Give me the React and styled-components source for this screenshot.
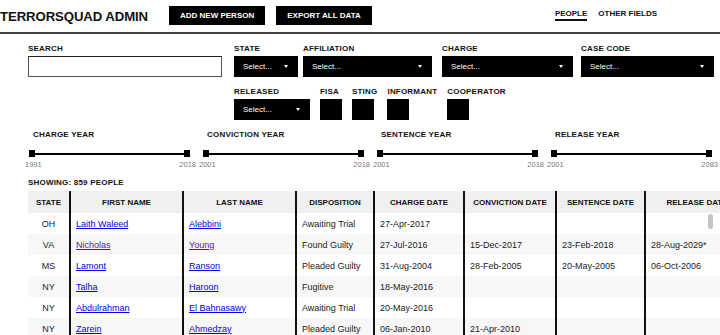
import styled, { createGlobalStyle } from "styled-components";

const Global = createGlobalStyle`
    html, body{
        margin: 0;
        padding: 0;
        overflow: hidden;
        background: #fff;
    }
    body{
        font-family: "Liberation Sans", Arial, sans-serif;
        color: #111;
    }
`

const Page = styled.div`
    width: 720px;
    height: 335px;
    overflow: hidden;
`

const Header = styled.div`
    height: 32px;
    border-bottom: 2px solid #444;
    display: flex;
    align-items: center;
    padding-right: 63px;
`

const Title = styled.div`
    font-size: 13.2px;
    font-weight: 700;
    letter-spacing: -0.1px;
    margin-right: 21px;
`

const HeadBtn = styled.div`
    background: #000;
    color: #fff;
    font-size: 8px;
    font-weight: 700;
    height: 19px;
    line-height: 19px;
    padding: 0 11px;
    margin-right: 11px;
    margin-top: -1px;
`

const Nav = styled.div`
    margin-left: auto;
    display: flex;
    gap: 11px;
    font-size: 8px;
    font-weight: 700;
    margin-top: -3px;
`

const NavItem = styled.div`
    padding-bottom: 1px;
    border-bottom: 2px solid ${p => p.$active ? "#111" : "transparent"};
`

const Content = styled.div`
    padding-left: 28px;
`

const Filters = styled.div`
    display: flex;
    gap: 12px;
    margin-top: 10px;
`

const FilterCol = styled.div`
    display: flex;
    flex-direction: column;
    gap: 10px;
`

const FilterRow = styled.div`
    display: flex;
    gap: ${p => p.$gap || 8}px;
`

const Group = styled.div`
    display: flex;
    flex-direction: column;
    margin-left: ${p => p.$ml || 0}px;
`

const Label = styled.div`
    font-size: 8px;
    font-weight: 700;
    line-height: 10px;
    margin-bottom: 2px;
    white-space: nowrap;
    letter-spacing: 0.2px;
    color: #111;
`

const SearchBox = styled.div`
    width: 194px;
    height: 21px;
    box-sizing: border-box;
    border: 1px solid #555;
    border-top-color: #222;
    background: #fff;
`

const Select = styled.div`
    width: ${p => p.$w}px;
    height: 21px;
    box-sizing: border-box;
    background: #000;
    color: #fff;
    font-size: 8px;
    line-height: 21px;
    padding-left: 9px;
    position: relative;
    &::after{
        content: "";
        position: absolute;
        right: 10px;
        top: 9px;
        border-left: 2.5px solid transparent;
        border-right: 2.5px solid transparent;
        border-top: 3px solid #fff;
    }
`

const Check = styled.div`
    width: 22px;
    height: 21px;
    background: #000;
`

const Sliders = styled.div`
    display: grid;
    grid-template-columns: repeat(4, 174px);
    margin-left: -2px;
    margin-top: 10px;
`

const SliderCell = styled.div`
    display: flex;
    flex-direction: column;
`

const SliderLabel = styled(Label)`
    padding-left: 7px;
    margin-bottom: 10px;
`

const Track = styled.div`
    display: flex;
    align-items: center;
    width: 161px;
    margin-left: 3px;
`

const Handle = styled.div`
    width: 6px;
    height: 7px;
    background: #000;
`

const Line = styled.div`
    flex: 1;
    height: 2px;
    background: #000;
`

const Values = styled.div`
    display: flex;
    justify-content: space-between;
    width: 171px;
    margin-left: -1px;
    font-size: 7.5px;
    line-height: 10px;
    margin-top: 3px;
    color: #777;
`

const Showing = styled(Label)`
    margin-top: 8px;
    margin-bottom: 3px;
`

const TableWrap = styled.div`
    position: relative;
    width: 760px;
`

const Row = styled.div`
    display: grid;
    grid-template-columns: 41px 113px 113px 78px 90px 92px 89px 104px;
    height: ${p => p.$head ? 22 : 21}px;
    background: ${p => p.$head ? "#efefef" : p.$alt ? "#f7f7f8" : "#fff"};
`

const Cell = styled.div`
    box-sizing: border-box;
    border-left: ${p => p.$first ? "none" : "2px solid #111"};
    display: flex;
    align-items: center;
    justify-content: ${p => p.$center ? "center" : "flex-start"};
    padding-left: ${p => p.$center ? 0 : 5}px;
    font-size: 9px;
    white-space: nowrap;
    overflow: hidden;
    color: #222;
`

const HeadCell = styled(Cell)`
    justify-content: center;
    padding-left: 0;
    font-size: 8px;
    font-weight: 700;
    color: #111;
`

const Link = styled.a`
    color: ${p => p.$visited ? "#551a8b" : "#0000ee"};
    text-decoration: underline;
`

const Thumb = styled.div`
    position: absolute;
    left: 680px;
    top: 23px;
    width: 5px;
    height: 15px;
    border-radius: 3px;
    background: #c4c4c4;
`

const cols = ["STATE", "FIRST NAME", "LAST NAME", "DISPOSITION", "CHARGE DATE", "CONVICTION DATE", "SENTENCE DATE", "RELEASE DATE"]

const people = [
    ["OH", "Laith Waleed", "Alebbini", "Awaiting Trial", "27-Apr-2017", "", "", ""],
    ["VA", "Nicholas", "Young", "Found Guilty", "27-Jul-2016", "15-Dec-2017", "23-Feb-2018", "28-Aug-2029*", true],
    ["MS", "Lamont", "Ranson", "Pleaded Guilty", "31-Aug-2004", "28-Feb-2005", "20-May-2005", "06-Oct-2006"],
    ["NY", "Talha", "Haroon", "Fugitive", "18-May-2016", "", "", ""],
    ["NY", "Abdulrahman", "El Bahnasawy", "Awaiting Trial", "20-May-2016", "", "", ""],
    ["NY", "Zarein", "Ahmedzay", "Pleaded Guilty", "06-Jan-2010", "21-Apr-2010", "", ""],
]

const sliders = [
    ["CHARGE YEAR", "1991", "2018"],
    ["CONVICTION YEAR", "2001", "2018"],
    ["SENTENCE YEAR", "2001", "2018"],
    ["RELEASE YEAR", "2001", "2083"],
]

export default function App(){
    return <Page>
        <Global/>
        <Header>
            <Title>TERRORSQUAD ADMIN</Title>
            <HeadBtn>ADD NEW PERSON</HeadBtn>
            <HeadBtn>EXPORT ALL DATA</HeadBtn>
            <Nav>
                <NavItem $active>PEOPLE</NavItem>
                <NavItem>OTHER FIELDS</NavItem>
            </Nav>
        </Header>
        <Content>
            <Filters>
                <Group>
                    <Label>SEARCH</Label>
                    <SearchBox/>
                </Group>
                <FilterCol>
                    <FilterRow $gap={5}>
                        <Group>
                            <Label>STATE</Label>
                            <Select $w={64}>Select...</Select>
                        </Group>
                        <Group>
                            <Label>AFFILIATION</Label>
                            <Select $w={129}>Select...</Select>
                        </Group>
                        <Group $ml={5}>
                            <Label>CHARGE</Label>
                            <Select $w={131}>Select...</Select>
                        </Group>
                        <Group $ml={3}>
                            <Label>CASE CODE</Label>
                            <Select $w={133}>Select...</Select>
                        </Group>
                    </FilterRow>
                    <FilterRow $gap={10}>
                        <Group>
                            <Label>RELEASED</Label>
                            <Select $w={76}>Select...</Select>
                        </Group>
                        <Group>
                            <Label>FISA</Label>
                            <Check/>
                        </Group>
                        <Group>
                            <Label>STING</Label>
                            <Check/>
                        </Group>
                        <Group>
                            <Label>INFORMANT</Label>
                            <Check/>
                        </Group>
                        <Group>
                            <Label>COOPERATOR</Label>
                            <Check/>
                        </Group>
                    </FilterRow>
                </FilterCol>
            </Filters>
            <Sliders>
                {sliders.map(([name, min, max]) => (
                    <SliderCell key={name}>
                        <SliderLabel>{name}</SliderLabel>
                        <Track>
                            <Handle/>
                            <Line/>
                            <Handle/>
                        </Track>
                        <Values>
                            <span>{min}</span>
                            <span>{max}</span>
                        </Values>
                    </SliderCell>
                ))}
            </Sliders>
            <Showing>SHOWING: 859 PEOPLE</Showing>
            <TableWrap>
                <Row $head>
                    {cols.map((c, i) => <HeadCell key={c} $first={i === 0}>{c}</HeadCell>)}
                </Row>
                {people.map((p, i) => (
                    <Row key={i} $alt={i % 2 === 1}>
                        <Cell $first $center>{p[0]}</Cell>
                        <Cell><Link href="#" $visited={p[8]}>{p[1]}</Link></Cell>
                        <Cell><Link href="#" $visited={p[8]}>{p[2]}</Link></Cell>
                        <Cell>{p[3]}</Cell>
                        <Cell>{p[4]}</Cell>
                        <Cell>{p[5]}</Cell>
                        <Cell>{p[6]}</Cell>
                        <Cell>{p[7]}</Cell>
                    </Row>
                ))}
                <Thumb/>
            </TableWrap>
        </Content>
    </Page>
}
